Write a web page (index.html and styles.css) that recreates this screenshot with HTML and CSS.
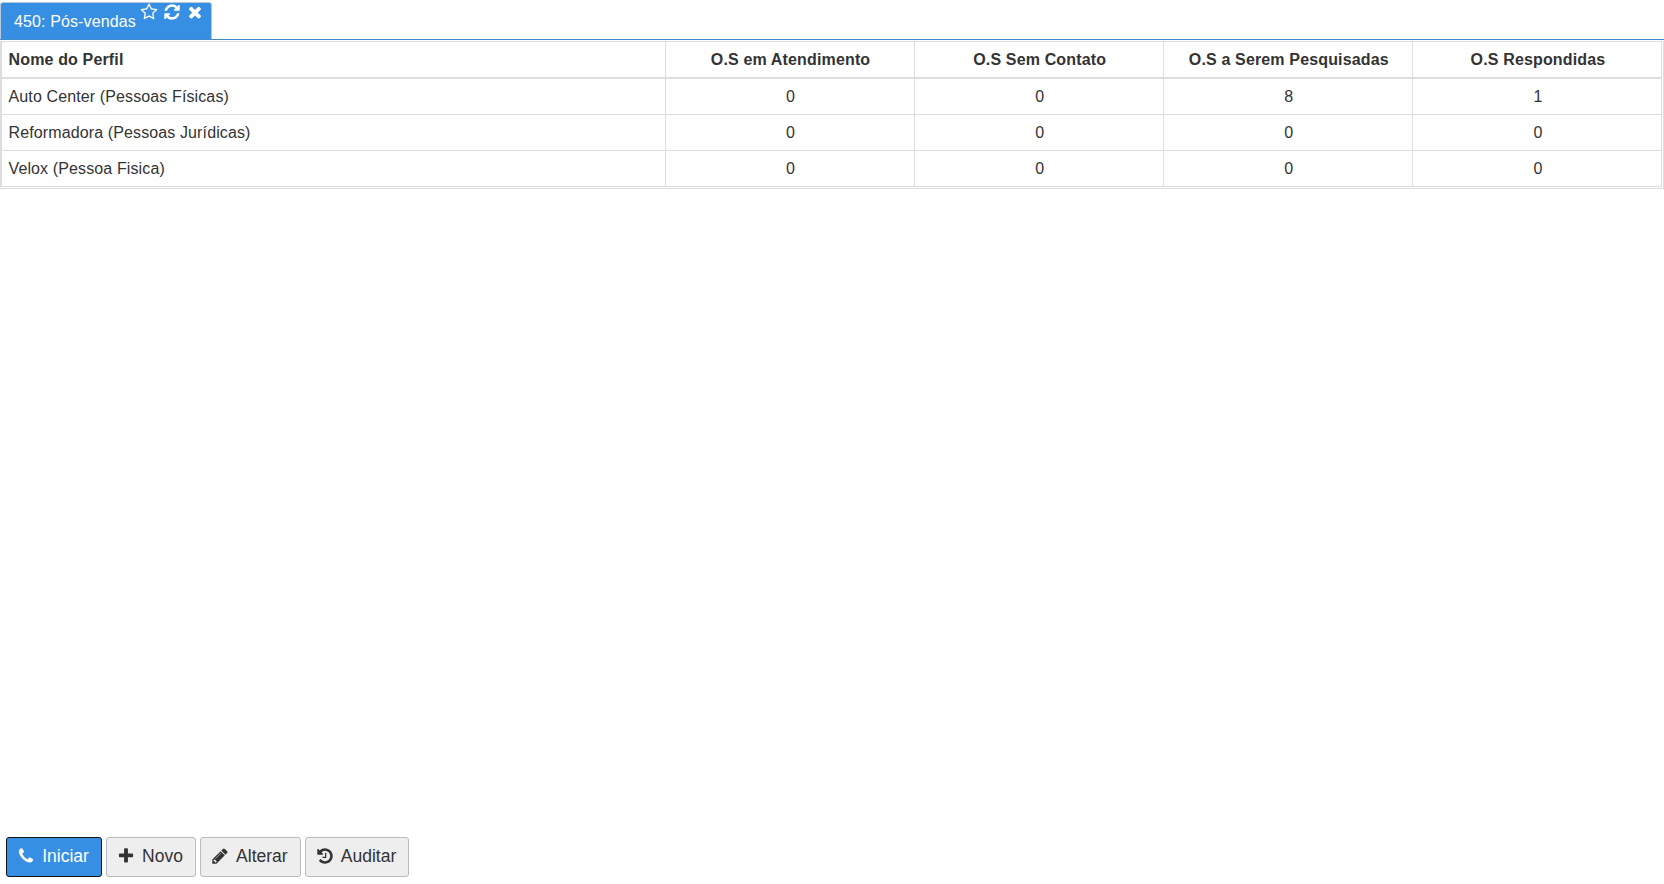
FILE: index.html
```html
<!DOCTYPE html>
<html lang="pt">
<head>
<meta charset="utf-8">
<title>450: Pós-vendas</title>
<link rel="stylesheet" href="styles.css">
</head>
<body>
<div class="page">
  <div class="tabs">
    <div class="tab">
      <span class="tab-title">450: Pós-vendas</span>
      <span class="tab-icons">
        <svg class="ti" viewBox="0 0 1792 1792"><path d="M1201 1004l306-297-422-62-189-382-189 382-422 62 306 297-73 421 378-199 377 199zm527-357q0 22-26 48l-363 354 86 500q1 7 1 20 0 50-41 50-19 0-40-12l-449-236-449 236q-22 12-40 12-21 0-31.5-14.5t-10.5-35.5q0-6 2-20l86-500-364-354q-25-27-25-48 0-37 56-46l502-73 225-455q19-41 49-41t49 41l225 455 502 73q56 9 56 46z"/></svg>
        <svg class="ti" viewBox="0 0 1792 1792"><path d="M1639 1056q0 5-1 7-64 268-268 434.5t-478 166.5q-146 0-282.5-55t-243.5-157l-129 129q-19 19-45 19t-45-19-19-45v-448q0-26 19-45t45-19h448q26 0 45 19t19 45-19 45l-137 137q71 66 161 102t187 36q134 0 250-65t186-179q11-17 53-117 8-23 30-23h192q13 0 22.5 9.5t9.5 22.5zm25-800v448q0 26-19 45t-45 19h-448q-26 0-45-19t-19-45 19-45l138-138q-148-137-349-137-134 0-250 65t-186 179q-11 17-53 117-8 23-30 23h-199q-13 0-22.5-9.5t-9.5-22.5v-7q65-268 270-434.5t480-166.5q146 0 284 55.5t245 156.5l130-129q19-19 45-19t45 19 19 45z"/></svg>
        <svg class="ti" viewBox="0 0 1792 1792"><path d="M1490 1322q0 40-28 68l-136 136q-28 28-68 28t-68-28l-294-294-294 294q-28 28-68 28t-68-28l-136-136q-28-28-28-68t28-68l294-294-294-294q-28-28-28-68t28-68l136-136q28-28 68-28t68 28l294 294 294-294q28-28 68-28t68 28l136 136q28 28 28 68t-28 68l-294 294 294 294q28 28 28 68z"/></svg>
      </span>
    </div>
  </div>
  <div class="content">
    <div class="grid-wrap">
      <table class="grid">
        <thead>
          <tr>
            <th class="col-name">Nome do Perfil</th>
            <th>O.S em Atendimento</th>
            <th>O.S Sem Contato</th>
            <th>O.S a Serem Pesquisadas</th>
            <th>O.S Respondidas</th>
          </tr>
        </thead>
        <tbody>
          <tr><td class="col-name">Auto Center (Pessoas Físicas)</td><td>0</td><td>0</td><td>8</td><td>1</td></tr>
          <tr><td class="col-name">Reformadora (Pessoas Jurídicas)</td><td>0</td><td>0</td><td>0</td><td>0</td></tr>
          <tr><td class="col-name">Velox (Pessoa Fisica)</td><td>0</td><td>0</td><td>0</td><td>0</td></tr>
        </tbody>
      </table>
    </div>
  </div>
  <div class="toolbar">
    <button class="btn btn-primary"><svg class="bi" viewBox="0 0 1792 1792"><path d="M1600 1240q0 27-10 70.5t-21 68.5q-21 50-122 106-94 51-186 51-27 0-53-3.5t-57.5-12.5-47-14.5-55.5-20.5-49-18q-98-35-175-83-127-79-264-216t-216-264q-48-77-83-175-3-9-18-49t-20.5-55.5-14.5-47-12.5-57.5-3.5-53q0-92 51-186 56-101 106-122 25-11 68.5-21t70.5-10q14 0 21 3 18 6 53 76 11 19 30 54t35 63.5 31 53.5q3 4 17.5 25t21.5 35.5 7 28.5q0 20-28.5 50t-62 55-62 53-28.5 46q0 9 5 22.5t8.5 20.5 14 24 11.5 19q76 137 174 235t235 174q2 1 19 11.5t24 14 20.5 8.5 22.5 5q18 0 46-28.5t53-62 55-62 50-28.5q14 0 28.5 7t35.5 21.5 25 17.5q25 15 53.5 31t63.5 35 54 30q70 35 76 53 3 7 3 21z"/></svg>Iniciar</button>
    <button class="btn"><svg class="bi" viewBox="0 0 1792 1792"><path d="M1600 736v192q0 40-28 68t-68 28h-416v416q0 40-28 68t-68 28h-192q-40 0-68-28t-28-68v-416h-416q-40 0-68-28t-28-68v-192q0-40 28-68t68-28h416v-416q0-40 28-68t68-28h192q40 0 68 28t28 68v416h416q40 0 68 28t28 68z"/></svg>Novo</button>
    <button class="btn"><svg class="bi" viewBox="0 0 1792 1792"><path d="M491 1536l91-91-235-235-91 91v107h128v128h107zm523-928q0-22-22-22-10 0-17 7l-542 542q-7 7-7 17 0 22 22 22 10 0 17-7l542-542q7-7 7-17zm-54-192l416 416-832 832h-416v-416zm683 96q0 53-37 90l-166 166-416-416 166-165q36-38 90-38 53 0 91 38l235 234q37 39 37 91z"/></svg>Alterar</button>
    <button class="btn"><svg class="bi" viewBox="0 0 1792 1792"><path d="M1664 896q0 156-61 298t-164 245-245 164-298 61q-172 0-327-72.5t-264-204.5q-7-10-6.5-22.5t8.5-20.5l137-138q10-9 25-9 16 2 23 12 73 95 179 147t225 52q104 0 198.5-40.5t163.5-109.5 109.5-163.5 40.5-198.5-40.5-198.5-109.5-163.5-163.5-109.5-198.5-40.5q-98 0-188 35.5t-160 101.5l137 138q31 30 14 69-17 40-59 40h-448q-26 0-45-19t-19-45v-448q0-42 40-59 39-17 69 14l130 129q107-101 244.5-156.5t284.5-55.5q156 0 298 61t245 164 164 245 61 298zm-640-288v448q0 14-9 23t-23 9h-320q-14 0-23-9t-9-23v-64q0-14 9-23t23-9h224v-352q0-14 9-23t23-9h64q14 0 23 9t9 23z"/></svg>Auditar</button>
  </div>
</div>
</body>
</html>
```
FILE: styles.css
```css
* { box-sizing: border-box; }
html, body { margin: 0; height: 100%; overflow: hidden; background: #fff; }
body { font-family: "Liberation Sans", Arial, sans-serif; font-size: 16px; color: #333; }
.page { height: 884px; display: flex; flex-direction: column; }
.tabs { height: 40px; padding: 2px 0 0 0; border-bottom: 1px solid #428bca; flex: none; display: flex; }
.tab { width: 212px; height: 37px; background: #378fe3; color: #fff; border: 1px solid #b9c9d8; border-bottom: 0; border-radius: 3px 3px 0 0; padding: 0 0 0 13px; display: flex; }
.tab-title { line-height: 37px; letter-spacing: 0.12px; }
.tab-icons { display: flex; gap: 5px; margin: 0 0 0 4px; align-items: flex-start; }
.ti { width: 18px; height: 18px; fill: #fff; }
.content { flex: 1; padding: 1px 0 0 0; }
.grid-wrap { border: 1px solid #ddd; border-left: 0; border-top: 0; padding-right: 1px; padding-bottom: 1px; }
.grid { width: 100%; border-collapse: collapse; table-layout: fixed; }
th, td { border: 1px solid #ddd; height: 36px; padding: 0 6px 0 8px; text-align: center; vertical-align: middle; font-size: 16px; letter-spacing: 0.12px; }
thead th { border-bottom-width: 2px; height: 36px; padding-top: 2px; font-weight: bold; letter-spacing: 0.15px; color: #333; }
tbody tr:first-child td { height: 37px; padding-top: 2px; }
.col-name { text-align: left; width: 664px; }
th.col-name, td.col-name { padding-left: 6.5px; }
th:first-child, td:first-child { border-left-width: 2px; }
.toolbar { flex: none; display: flex; gap: 4px; padding: 0 0 7px 6px; }
.btn { height: 40px; padding: 0 12px 2px 10px; border: 1px solid #bbb; border-radius: 3px; background: #eee; color: #333; font: 17.5px "Liberation Sans", Arial, sans-serif; display: flex; align-items: center; gap: 7.2px; }
.btn-primary { background: #378fe3; color: #fff; border-color: #111; }
.bi { width: 18px; height: 18px; fill: currentColor; flex: none; }
```
